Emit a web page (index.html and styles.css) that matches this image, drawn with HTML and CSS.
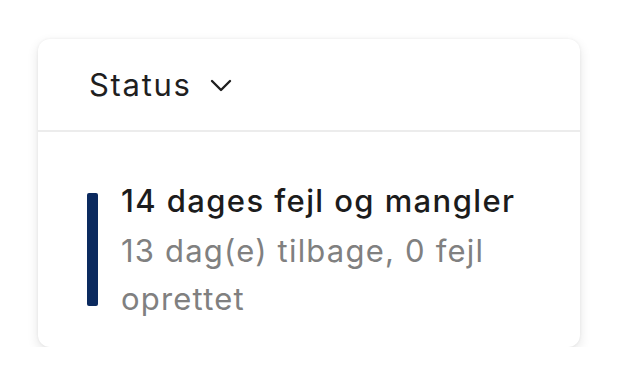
FILE: index.html
```html
<!DOCTYPE html>
<html lang="da">
<head>
<meta charset="utf-8">
<link rel="stylesheet" href="styles.css">
</head>
<body>
<div class="card">
  <div class="card-header">
    <span class="header-title">Status</span>
    <svg class="chevron" width="22" height="13" viewBox="0 0 22 13"><path d="M2 2 L11 11 L20 2" fill="none" stroke="#1f1f1f" stroke-width="2.4" stroke-linecap="round" stroke-linejoin="round"/></svg>
  </div>
  <div class="card-body">
    <div class="status-bar"></div>
    <div class="status-text">
      <div class="status-title">14 dages fejl og mangler</div>
      <div class="status-sub">13 dag(e) tilbage, 0 fejl oprettet</div>
    </div>
  </div>
</div>
</body>
</html>
```
FILE: styles.css
```css
html, body {
  margin: 0;
  padding: 0;
  background: #ffffff;
}
body {
  font-family: Inter, "Noto Sans", sans-serif;
  padding: 39px 0 0 38px;
}
.card {
  width: 542px;
  height: 308px;
  box-sizing: border-box;
  background: #fff;
  border-radius: 12px;
  box-shadow: 0 4px 12px rgba(0,0,0,0.11), 0 0 3px rgba(0,0,0,0.06);
  overflow: hidden;
}
.card-header {
  height: 93px;
  box-sizing: border-box;
  display: flex;
  align-items: center;
  padding-left: 51px;
  border-bottom: 2px solid #ececec;
}
.header-title {
  font-size: 31px;
  letter-spacing: 1.7px;
  color: #1f1f1f;
}
.chevron {
  margin-left: 18px;
  margin-top: 2px;
}
.card-body {
  display: flex;
  padding: 45px 30px 0 49px;
}
.status-bar {
  width: 11px;
  height: 113px;
  background: #0b2a5f;
  border-radius: 2px;
  margin-top: 16px;
  flex-shrink: 0;
}
.status-text {
  margin-left: 23px;
  width: 420px;
}
.status-title {
  font-size: 31px;
  line-height: 48px;
  letter-spacing: 1.4px;
  color: #1c1c1c;
  font-weight: 500;
  white-space: nowrap;
}
.status-sub {
  margin-top: 2px;
  font-size: 31px;
  line-height: 48px;
  letter-spacing: 1.2px;
  color: #808080;
}
```
